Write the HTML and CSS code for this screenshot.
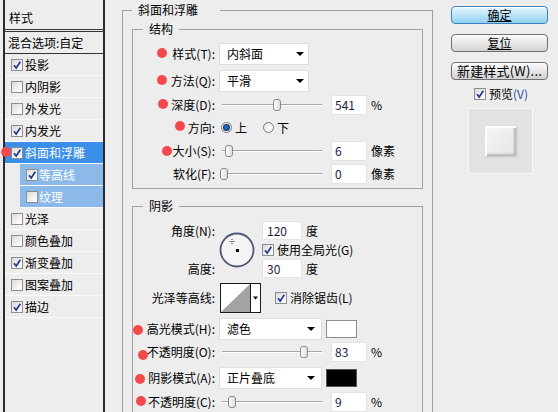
FILE: index.html
```html
<!DOCTYPE html>
<html lang="zh-CN">
<head>
<meta charset="utf-8">
<title>图层样式</title>
<link rel="stylesheet" href="styles.css">
</head>
<body>
<div class="dialog">
  <div class="style-list">
    <div class="list-head">样式</div>
    <div class="list-blend">混合选项:自定</div>
    <div class="item"><span class="cb"><svg viewBox="0 0 10 10"><path d="M2 5.2 L4.2 8 L8.3 1.8" /></svg></span>投影</div>
    <div class="item"><span class="cb"></span>内阴影</div>
    <div class="item"><span class="cb"></span>外发光</div>
    <div class="item"><span class="cb"><svg viewBox="0 0 10 10"><path d="M2 5.2 L4.2 8 L8.3 1.8" /></svg></span>内发光</div>
    <div class="item selected"><span class="cb"><svg viewBox="0 0 10 10"><path d="M2 5.2 L4.2 8 L8.3 1.8" /></svg></span>斜面和浮雕</div>
    <div class="item sub"><span class="cb"><svg viewBox="0 0 10 10"><path d="M2 5.2 L4.2 8 L8.3 1.8" /></svg></span>等高线</div>
    <div class="item sub"><span class="cb"></span>纹理</div>
    <div class="item"><span class="cb"></span>光泽</div>
    <div class="item"><span class="cb"></span>颜色叠加</div>
    <div class="item"><span class="cb"><svg viewBox="0 0 10 10"><path d="M2 5.2 L4.2 8 L8.3 1.8" /></svg></span>渐变叠加</div>
    <div class="item"><span class="cb"></span>图案叠加</div>
    <div class="item"><span class="cb"><svg viewBox="0 0 10 10"><path d="M2 5.2 L4.2 8 L8.3 1.8" /></svg></span>描边</div>
  </div>

  <div class="main">
    <fieldset class="group outer">
      <legend>斜面和浮雕</legend>

      <fieldset class="group inner struct">
        <legend>结构</legend>
        <div class="row sel-row">
          <span class="lbl">样式(T):</span>
          <div class="select"><span>内斜面</span><span class="arrow"></span></div>
        </div>
        <div class="row sel-row second">
          <span class="lbl">方法(Q):</span>
          <div class="select"><span>平滑</span><span class="arrow"></span></div>
        </div>
        <div class="row">
          <span class="lbl">深度(D):</span>
          <div class="slider"><span class="thumb" style="left:54px"></span></div>
          <div class="num">541</div><span class="unit">%</span>
        </div>
        <div class="row">
          <span class="lbl">方向:</span>
          <span class="radio on"></span><span class="rtext">上</span>
          <span class="radio second-radio"></span><span class="rtext">下</span>
        </div>
        <div class="row">
          <span class="lbl">大小(S):</span>
          <div class="slider"><span class="thumb" style="left:6px"></span></div>
          <div class="num">6</div><span class="unit">像素</span>
        </div>
        <div class="row">
          <span class="lbl">软化(F):</span>
          <div class="slider"><span class="thumb" style="left:1px"></span></div>
          <div class="num">0</div><span class="unit">像素</span>
        </div>
      </fieldset>

      <fieldset class="group inner shade">
        <legend>阴影</legend>
        <div class="angle">
          <span class="lbl a-lbl1">角度(N):</span>
          <div class="dial">
            <svg width="36" height="36" viewBox="0 0 36 36">
              <circle cx="18" cy="18" r="16.5" fill="#f4f4f4" stroke="#4b5877" stroke-width="1.8"/>
              <rect x="17" y="17" width="3" height="3" fill="#000"/>
              <path d="M10.5 9.5h5M13 7v5" stroke="#333" stroke-width="1" stroke-dasharray="1 1"/>
            </svg>
          </div>
          <div class="a-c1"><div class="num short">120</div><span class="unit">度</span></div>
          <div class="a-c2"><span class="cb"><svg viewBox="0 0 10 10"><path d="M2 5.2 L4.2 8 L8.3 1.8" /></svg></span><span>使用全局光(G)</span></div>
          <span class="lbl a-lbl3">高度:</span>
          <div class="a-c3"><div class="num short">30</div><span class="unit">度</span></div>
        </div>
        <div class="row contour-row">
          <span class="lbl">光泽等高线:</span>
          <div class="contour">
            <svg width="41" height="30" viewBox="0 0 41 30">
              <rect x="0.5" y="0.5" width="40" height="29" fill="#fff" stroke="#1a1a1a"/>
              <polygon points="1,29 30,1 30,29" fill="#a3a3a3"/>
              <line x1="30.5" y1="0" x2="30.5" y2="30" stroke="#1a1a1a"/>
              <polygon points="33,13.5 38,13.5 35.5,16.5" fill="#000"/>
            </svg>
          </div>
          <span class="cb aa"><svg viewBox="0 0 10 10"><path d="M2 5.2 L4.2 8 L8.3 1.8" /></svg></span><span>消除锯齿(L)</span>
        </div>
        <div class="row sel-row hl">
          <span class="lbl">高光模式(H):</span>
          <div class="select wide"><span>滤色</span><span class="arrow"></span></div>
          <span class="swatch white"></span>
        </div>
        <div class="row op-row">
          <span class="lbl">不透明度(O):</span>
          <div class="slider"><span class="thumb" style="left:81px"></span></div>
          <div class="num">83</div><span class="unit">%</span>
        </div>
        <div class="row sel-row sh">
          <span class="lbl">阴影模式(A):</span>
          <div class="select wide"><span>正片叠底</span><span class="arrow"></span></div>
          <span class="swatch black"></span>
        </div>
        <div class="row op-row last">
          <span class="lbl">不透明度(C):</span>
          <div class="slider"><span class="thumb" style="left:9px"></span></div>
          <div class="num">9</div><span class="unit">%</span>
        </div>
      </fieldset>
    </fieldset>
  </div>

  <div class="side">
    <div class="btn primary"><span class="ul">确定</span></div>
    <div class="btn"><span class="ul">复位</span></div>
    <div class="btn new">新建样式(W)...</div>
    <div class="preview-check"><span class="cb"><svg viewBox="0 0 10 10"><path d="M2 5.2 L4.2 8 L8.3 1.8" /></svg></span><span>预览<span class="key">(V)</span></span></div>
    <div class="preview"><div class="tile"></div></div>
  </div>
</div>

<span class="mark m-list"></span>
<span class="mark m-style"></span>
<span class="mark m-method"></span>
<span class="mark m-depth"></span>
<span class="mark m-dir"></span>
<span class="mark m-size"></span>
<span class="mark m-hl"></span>
<span class="mark m-op1"></span>
<span class="mark m-sh"></span>
<span class="mark m-op2"></span>
</body>
</html>
```

FILE: styles.css
```css
* { box-sizing: border-box; }

html, body {
  margin: 0;
  height: 412px;
  overflow: hidden;
}

body {
  position: relative;
  width: 558px;
  background: #ededed;
  color: #000;
  font: 12px/16px "Noto Sans CJK SC", "Liberation Sans", sans-serif;
}

.dialog {
  display: flex;
  align-items: flex-start;
  height: 412px;
}

/* ---------- left style list ---------- */
.style-list {
  margin-left: 3px;
  width: 102px;
  height: 412px;
  flex: none;
  border-left: 2px solid #2b2b2b;
  border-right: 2px solid #2b2b2b;
  background: #ededed;
}

.list-head {
  height: 32px;
  padding: 6px 0 0 4px;
  border-bottom: 3px double #333;
  display: flex;
  align-items: center;
}

.list-blend {
  height: 22px;
  padding-left: 3px;
  border-bottom: 1px solid #333;
  display: flex;
  align-items: center;
}

.item {
  height: 22px;
  padding-left: 6px;
  border-bottom: 1px solid #fbfbfb;
  display: flex;
  align-items: center;
  gap: 2px;
}

.item.selected {
  background: #3b8fe9;
  color: #fff;
}

.item.sub {
  margin-left: 15px;
  background: #8ab9ea;
  color: #fff;
  gap: 1px;
}

/* checkbox */
.cb {
  width: 12px;
  height: 12px;
  flex: none;
  border: 1px solid #8d8e8f;
  background: linear-gradient(135deg, #d9d9d9, #f7f7f7 70%, #fff);
  display: flex;
  align-items: center;
  justify-content: center;
}

.cb svg {
  width: 10px;
  height: 10px;
}

.cb svg path {
  fill: none;
  stroke: #26398d;
  stroke-width: 1.7;
}

/* ---------- main group boxes ---------- */
.main {
  margin-left: 17px;
  margin-top: 2px;
  width: 311px;
  flex: none;
}

.group {
  margin: 0;
  min-width: 0;
  border: 1px solid #a0a0a0;
  padding: 0;
}

.group > legend {
  line-height: 16px;
  height: 16px;
}

.outer {
  padding: 3px 9px 20px 9px;
}

.outer > legend {
  padding: 0 22px 0 6px;
}

.inner > legend {
  margin-left: 10px;
  padding: 0 6px;
}

.struct {
  padding-top: 6px;
  padding-bottom: 3px;
}

.shade {
  margin-top: 9px;
  padding-top: 7px;
  padding-bottom: 10px;
}

.row {
  display: flex;
  align-items: center;
  height: 23px;
}

.sel-row {
  height: 22px;
  margin-bottom: 5px;
}

.sel-row.second {
  margin-bottom: 1px;
}

.lbl {
  width: 82px;
  flex: none;
  margin-right: 4px;
  text-align: right;
  white-space: nowrap;
}

.select {
  width: 90px;
  height: 22px;
  flex: none;
  background: #fff;
  border: 1px solid #dedede;
  display: flex;
  align-items: center;
  justify-content: space-between;
  padding: 0 4px 0 7px;
}

.select.wide {
  width: 103px;
  padding-right: 6px;
}

.arrow {
  width: 0;
  height: 0;
  border-left: 4px solid transparent;
  border-right: 4px solid transparent;
  border-top: 4px solid #000;
}

.slider {
  position: relative;
  width: 103px;
  height: 14px;
  flex: none;
}

.slider::before {
  content: "";
  position: absolute;
  left: 3px;
  right: 0;
  top: 6px;
  height: 1px;
  background: #a6a6a6;
  box-shadow: 0 1px 0 #fff;
}

.thumb {
  position: absolute;
  top: 1px;
  width: 8px;
  height: 12px;
  border: 1px solid #8a8a8a;
  border-radius: 3px;
  background: linear-gradient(90deg, #fff, #dcdcdc);
}

.num {
  width: 36px;
  height: 20px;
  flex: none;
  margin-left: 9px;
  padding-left: 3px;
  background: #fff;
  border: 1px solid #e3e3e3;
  line-height: 18px;
  color: #1c1c3a;
}

.num.short {
  width: 40px;
  height: 19px;
  margin-left: 0;
  padding-left: 4px;
  line-height: 17px;
}

.unit {
  margin-left: 4px;
}

/* radios */
.radio {
  width: 11px;
  height: 11px;
  flex: none;
  margin-left: 2px;
  border-radius: 50%;
  border: 1px solid #7c7c7c;
  background: radial-gradient(circle at 60% 60%, #fff, #dedede);
  display: flex;
  align-items: center;
  justify-content: center;
}

.radio.on::after {
  content: "";
  width: 5px;
  height: 5px;
  border-radius: 50%;
  background: #1e64b4;
  box-shadow: 0 0 0 1px #163c6a;
}

.radio.second-radio {
  margin-left: 16px;
}

.rtext {
  margin-left: 3px;
}

/* angle block */
.angle {
  display: grid;
  grid-template-columns: 82px 39px auto;
  grid-template-rows: 19px 19px 19px;
  column-gap: 4px;
  align-items: center;
}

.angle .lbl {
  margin-right: 0;
}

.a-lbl1 { grid-column: 1; grid-row: 1; }
.a-lbl3 { grid-column: 1; grid-row: 3; }

.dial {
  grid-column: 2;
  grid-row: 1 / 4;
  width: 36px;
  height: 36px;
}

.dial svg { display: block; }

.a-c1, .a-c2, .a-c3 {
  grid-column: 3;
  display: flex;
  align-items: center;
}

.a-c1 { grid-row: 1; }
.a-c2 { grid-row: 2; gap: 3px; }
.a-c3 { grid-row: 3; }

.contour-row {
  height: 30px;
  margin-top: 5px;
  margin-bottom: 5px;
}

.contour {
  margin-left: 1px;
  width: 41px;
  height: 30px;
  flex: none;
}

.contour svg { display: block; }

.cb.aa {
  margin-left: 14px;
  margin-right: 3px;
}

.swatch {
  width: 31px;
  height: 18px;
  margin-left: 4px;
  flex: none;
  border: 1px solid #8c8c8c;
}

.swatch.white { background: #fff; }
.swatch.black { background: #000; border-color: #555; }

.sel-row.hl {
  margin-bottom: 0;
}

.op-row {
  height: 24px;
}

.sel-row.sh {
  margin-top: 3px;
  margin-bottom: 1px;
}

/* ---------- right side ---------- */
.side {
  margin-left: 18px;
  width: 97px;
  flex: none;
  padding-top: 6px;
  display: flex;
  flex-direction: column;
}

.btn {
  height: 18px;
  margin-bottom: 10px;
  border: 1px solid #6e6e6e;
  border-radius: 4px;
  background: linear-gradient(#fbfbfb, #e9e9e9 45%, #d2d2d2);
  box-shadow: inset 0 1px 0 #fff;
  text-align: center;
  line-height: 16px;
  white-space: nowrap;
}

.btn.primary {
  border-color: #3c81c2;
  background: linear-gradient(#e6f6fd, #bfe6f8 45%, #93d1f1);
}

.btn .ul {
  text-decoration: underline;
  text-underline-offset: 1px;
}

.btn.new {
  margin-bottom: 6px;
  font-size: 13px;
  letter-spacing: 0.2px;
}

.preview-check {
  height: 16px;
  display: flex;
  align-items: center;
  justify-content: center;
  gap: 3px;
  padding-left: 3px;
}

.key { color: #2c4c9c; }

.preview {
  margin: 6px 0 0 17px;
  width: 65px;
  height: 66px;
  background: #e2e2e2;
  border: 1px solid #f8f8f8;
  display: flex;
  align-items: center;
  justify-content: center;
}

.tile {
  width: 31px;
  height: 30px;
  background: linear-gradient(135deg, #f6f6f6, #e4e4e4);
  box-shadow: inset 2px 2px 1px #fff, inset -2px -2px 2px #b8b8b8, 1px 1px 2px #c4c4c4;
}

/* ---------- red annotation dots ---------- */
.mark {
  position: absolute;
  width: 10px;
  height: 10px;
  border-radius: 50%;
  background: #f2494d;
}

.m-list   { left: 1px;   top: 147px; }
.m-style  { left: 157px; top: 48px; }
.m-method { left: 157px; top: 75px; }
.m-depth  { left: 158px; top: 99px; }
.m-dir    { left: 175px; top: 121px; }
.m-size   { left: 162px; top: 146px; }
.m-hl     { left: 133px; top: 325px; }
.m-op1    { left: 138px; top: 350px; }
.m-sh     { left: 135px; top: 374px; }
.m-op2    { left: 136px; top: 396px; }
```
